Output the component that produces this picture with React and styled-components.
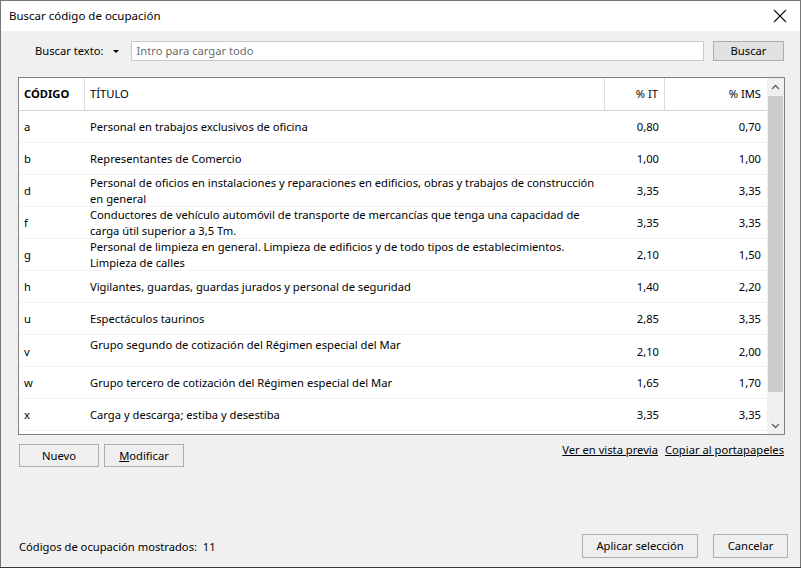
import React from "react";
import styled, { createGlobalStyle } from "styled-components";

const GlobalStyle = createGlobalStyle`
  html, body {
    margin: 0;
    padding: 0;
    background: #3a3a3a;
  }
  * { box-sizing: border-box; }
`;

const rows = [
  { code: "a", title: ["Personal en trabajos exclusivos de oficina"], it: "0,80", ims: "0,70" },
  { code: "b", title: ["Representantes de Comercio"], it: "1,00", ims: "1,00" },
  {
    code: "d",
    title: [
      "Personal de oficios en instalaciones y reparaciones en edificios, obras y trabajos de construcción",
      "en general",
    ],
    it: "3,35",
    ims: "3,35",
  },
  {
    code: "f",
    title: [
      "Conductores de vehículo automóvil de transporte de mercancías que tenga una capacidad de",
      "carga útil superior a 3,5 Tm.",
    ],
    it: "3,35",
    ims: "3,35",
  },
  {
    code: "g",
    title: [
      "Personal de limpieza en general. Limpieza de edificios y de todo tipos de establecimientos.",
      "Limpieza de calles",
    ],
    it: "2,10",
    ims: "1,50",
  },
  { code: "h", title: ["Vigilantes, guardas, guardas jurados y personal de seguridad"], it: "1,40", ims: "2,20" },
  { code: "u", title: ["Espectáculos taurinos"], it: "2,85", ims: "3,35" },
  { code: "v", title: ["Grupo segundo de cotización del Régimen especial del Mar", "\u00a0"], it: "2,10", ims: "2,00" },
  { code: "w", title: ["Grupo tercero de cotización del Régimen especial del Mar"], it: "1,65", ims: "1,70" },
  { code: "x", title: ["Carga y descarga; estiba y desestiba"], it: "3,35", ims: "3,35" },
];

const Window = styled.div`
  width: 801px;
  height: 567px;
  display: flex;
  flex-direction: column;
  background: #f0f0f0;
  border: 1px solid #767676;
  border-bottom: none;
  font-family: "Noto Sans", "Open Sans", sans-serif;
  font-size: 11.2px;
  line-height: 16px;
  color: #000;
`;

const TitleBar = styled.div`
  height: 30px;
  flex: none;
  background: #fff;
  display: flex;
  align-items: center;
  justify-content: space-between;
  padding: 0 13px 0 8px;
  font-size: 11.5px;
`;

const CloseIcon = () => (
  <svg width="14" height="14" viewBox="0 0 14 14">
    <path d="M1 1 L13 13 M13 1 L1 13" stroke="#111" strokeWidth="1.1" fill="none" />
  </svg>
);

const Body = styled.div`
  flex: 1;
  display: flex;
  flex-direction: column;
  padding: 10px 16px 9px 17px;
  & > * { flex: none; }
`;

const SearchRow = styled.div`
  display: flex;
  align-items: center;
  height: 20px;
  padding-left: 17px;
`;

const Label = styled.span`
  margin-right: 9px;
`;

const Caret = styled.span`
  width: 0;
  height: 0;
  border-left: 3px solid transparent;
  border-right: 3px solid transparent;
  border-top: 3px solid #000;
  margin-right: 12px;
`;

const TextInput = styled.div`
  flex: 1;
  height: 20px;
  border: 1px solid #c9c9c9;
  background: #fff;
  color: #6d6d6d;
  padding: 0 5px;
  display: flex;
  align-items: center;
`;

const Button = styled.div`
  height: ${(p) => p.$h || 23}px;
  width: ${(p) => p.$w}px;
  border: 1px solid #adadad;
  background: ${(p) => (p.$dark ? "#e1e1e1" : "#efefef")};
  display: flex;
  align-items: center;
  justify-content: center;
  flex: none;
  line-height: 16px;
  u { text-decoration: underline; }
`;

const Table = styled.div`
  margin-top: 16px;
  width: 767px;
  height: 358px;
  border: 1px solid #828282;
  background: #fff;
  display: flex;
  overflow: hidden;
`;

const TableMain = styled.div`
  width: 748px;
  display: flex;
  flex-direction: column;
  overflow: hidden;
`;

const Row = styled.div`
  display: grid;
  grid-template-columns: 66px 520px 60px 102px;
  flex: none;
  height: ${(p) => (p.$head ? 33 : 32)}px;
  border-bottom: 1px solid ${(p) => (p.$head ? "#d5d5d5" : "#f0f0f0")};
`;

const Cell = styled.div`
  display: flex;
  flex-direction: column;
  justify-content: ${(p) => (p.$top ? "flex-start" : "center")};
  align-items: ${(p) => (p.$right ? "flex-end" : "flex-start")};
  padding: ${(p) => (p.$right ? "0 6px 0 0" : "0 0 0 5px")};
  padding-top: ${(p) => (p.$top ? "2px" : "0")};
  white-space: nowrap;
  font-weight: ${(p) => (p.$bold ? 700 : 400)};
  border-right: ${(p) => (p.$sep ? "1px solid #dcdcdc" : "none")};
`;

const Scrollbar = styled.div`
  width: 17px;
  background: #f0f0f0;
  display: flex;
  flex-direction: column;
  align-items: center;
`;

const Arrow = styled.div`
  height: 17px;
  flex: none;
  display: flex;
  align-items: center;
  justify-content: center;
`;

const Thumb = styled.div`
  width: 15px;
  height: 296px;
  margin: 1px 0;
  background: #cdcdcd;
`;

const ActionsRow = styled.div`
  display: flex;
  align-items: flex-start;
  gap: 5px;
  height: 23px;
  margin-top: 9px;
  padding-left: 1px;
`;

const Links = styled.div`
  margin-left: auto;
  display: flex;
  gap: 7px;
  margin-top: -2px;
`;

const Link = styled.span`
  text-decoration: underline;
`;

const Footer = styled.div`
  margin-top: auto;
  display: flex;
  align-items: center;
  padding-left: 1px;
`;

const Count = styled.span`
  margin-top: 2px;
`;

const FooterButtons = styled.div`
  margin-left: auto;
  display: flex;
  gap: 15px;
  margin-right: -4px;
`;

const Chevron = ({ up }) => (
  <svg width="9" height="6" viewBox="0 0 9 6">
    <path d={up ? "M1 5 L4.5 1.5 L8 5" : "M1 1 L4.5 4.5 L8 1"} stroke="#606060" strokeWidth="1.3" fill="none" />
  </svg>
);

export default function App() {
  return (
    <>
      <GlobalStyle />
      <Window>
        <TitleBar>
          <span>Buscar código de ocupación</span>
          <CloseIcon />
        </TitleBar>
        <Body>
          <SearchRow>
            <Label>Buscar texto:</Label>
            <Caret />
            <TextInput>Intro para cargar todo</TextInput>
            <Button $dark $w={71} $h={20} style={{ marginLeft: 9 }}>
              Buscar
            </Button>
          </SearchRow>
          <Table>
            <TableMain>
              <Row $head>
                <Cell $bold $sep>CÓDIGO</Cell>
                <Cell $sep>TÍTULO</Cell>
                <Cell $right $sep>% IT</Cell>
                <Cell $right>% IMS</Cell>
              </Row>
              {rows.map((r) => (
                <Row key={r.code}>
                  <Cell>{r.code}</Cell>
                  <Cell $top={r.title.length > 1 && r.title[1] === "\u00a0"}>
                    {r.title.map((t, i) => (
                      <span key={i}>{t}</span>
                    ))}
                  </Cell>
                  <Cell $right>{r.it}</Cell>
                  <Cell $right>{r.ims}</Cell>
                </Row>
              ))}
            </TableMain>
            <Scrollbar>
              <Arrow>
                <Chevron up />
              </Arrow>
              <Thumb />
              <div style={{ flex: 1 }} />
              <Arrow>
                <Chevron />
              </Arrow>
            </Scrollbar>
          </Table>
          <ActionsRow>
            <Button $w={80}>Nuevo</Button>
            <Button $w={80}>
              <span>
                <u>M</u>odificar
              </span>
            </Button>
            <Links>
              <Link>Ver en vista previa</Link>
              <Link>Copiar al portapapeles</Link>
            </Links>
          </ActionsRow>
          <Footer>
            <Count>Códigos de ocupación mostrados:&nbsp; 11</Count>
            <FooterButtons>
              <Button $w={116} $h={24}>Aplicar selección</Button>
              <Button $w={75} $h={24}>Cancelar</Button>
            </FooterButtons>
          </Footer>
        </Body>
      </Window>
    </>
  );
}
